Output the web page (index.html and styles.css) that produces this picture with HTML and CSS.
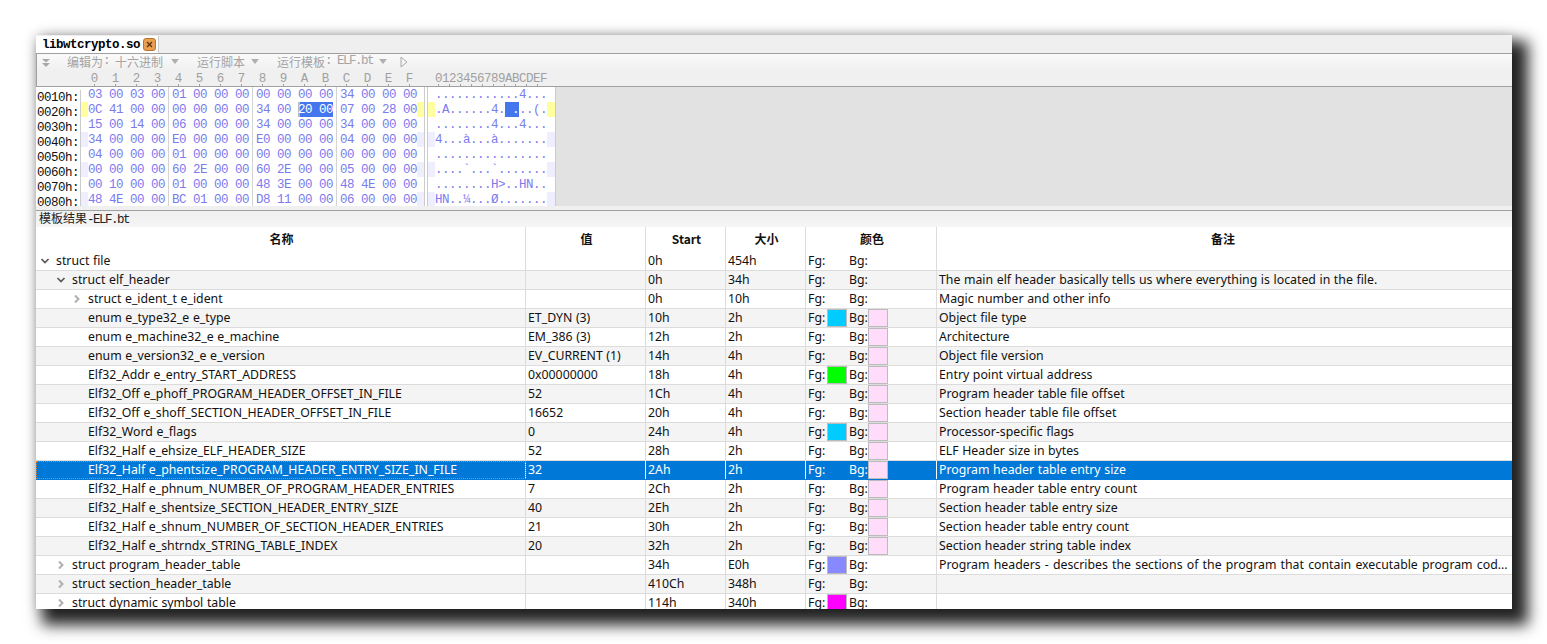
FILE: index.html
```html
<!DOCTYPE html>
<html lang="zh">
<head>
<meta charset="utf-8">
<title>libwtcrypto.so</title>
<link rel="stylesheet" href="styles.css">
</head>
<body>
<main class="window">
  <div class="tabbar">
    <div class="tab"><span class="tab-name">libwtcrypto.so</span>
      <svg class="tab-close" width="13" height="13" viewBox="0 0 13 13"><rect x=".5" y=".5" width="12" height="12" rx="2.5" fill="#e8a050" stroke="#b8742c"/><path d="M4 4l5 5M9 4l-5 5" stroke="#5a3010" stroke-width="1.3"/></svg>
    </div>
  </div>
  <div class="toolbar">
    <svg class="tb-icon" width="10" height="10" viewBox="0 0 10 10"><path d="M1 1h8L5 4.5zM1 5h8L5 9z" fill="#a8a8a8"/></svg>
    <span class="tb-item tb-edit">编辑为<span class="mono">: </span>十六进制<i class="caret"></i></span>
    <span class="tb-item tb-script">运行脚本<i class="caret"></i></span>
    <span class="tb-item tb-tpl">运行模板<span class="mono">: ELF.bt</span><i class="caret"></i></span>
    <svg class="tb-play" width="8" height="12" viewBox="0 0 8 12"><path d="M1 1l6 5-6 5z" fill="none" stroke="#a8a8a8"/></svg>
  </div>
  <div class="ruler">
    <div class="ruler-hex">
      <div class="rg"><span>0</span><span>1</span><span>2</span><span>3</span></div>
      <div class="rg"><span>4</span><span>5</span><span>6</span><span>7</span></div>
      <div class="rg"><span>8</span><span>9</span><span>A</span><span>B</span></div>
      <div class="rg"><span>C</span><span>D</span><span>E</span><span>F</span></div>
    </div>
    <div class="ruler-ascii">0123456789ABCDEF</div>
  </div>
  <div class="hex">
    <div class="hex-data">
      <div class="hr"><span class="off">0010h:</span><i class="m"></i><div class="g"><b>03</b><b>00</b><b>03</b><b>00</b></div><div class="g"><b>01</b><b>00</b><b>00</b><b>00</b></div><div class="g"><b>00</b><b>00</b><b>00</b><b>00</b></div><div class="g"><b>34</b><b>00</b><b>00</b><b>00</b></div><i class="m"></i><i class="sep"></i><i class="m"></i><span class="asc">............4...</span><i class="m me"></i></div>
      <div class="hr y"><span class="off">0020h:</span><i class="m"></i><div class="g"><b>0C</b><b>41</b><b>00</b><b>00</b></div><div class="g"><b>00</b><b>00</b><b>00</b><b>00</b></div><div class="g"><b>34</b><b>00</b><b class="sel sel-a">20</b><b class="sel">00</b></div><div class="g"><b>07</b><b>00</b><b>28</b><b>00</b></div><i class="m"></i><i class="sep"></i><i class="m"></i><span class="asc">.A......4.<em> .</em>..(.</span><i class="m me"></i></div>
      <div class="hr"><span class="off">0030h:</span><i class="m"></i><div class="g"><b>15</b><b>00</b><b>14</b><b>00</b></div><div class="g"><b>06</b><b>00</b><b>00</b><b>00</b></div><div class="g"><b>34</b><b>00</b><b>00</b><b>00</b></div><div class="g"><b>34</b><b>00</b><b>00</b><b>00</b></div><i class="m"></i><i class="sep"></i><i class="m"></i><span class="asc">........4...4...</span><i class="m me"></i></div>
      <div class="hr l"><span class="off">0040h:</span><i class="m"></i><div class="g"><b>34</b><b>00</b><b>00</b><b>00</b></div><div class="g"><b>E0</b><b>00</b><b>00</b><b>00</b></div><div class="g"><b>E0</b><b>00</b><b>00</b><b>00</b></div><div class="g"><b>04</b><b>00</b><b>00</b><b>00</b></div><i class="m"></i><i class="sep"></i><i class="m"></i><span class="asc">4...à...à.......</span><i class="m me"></i></div>
      <div class="hr"><span class="off">0050h:</span><i class="m"></i><div class="g"><b>04</b><b>00</b><b>00</b><b>00</b></div><div class="g"><b>01</b><b>00</b><b>00</b><b>00</b></div><div class="g"><b>00</b><b>00</b><b>00</b><b>00</b></div><div class="g"><b>00</b><b>00</b><b>00</b><b>00</b></div><i class="m"></i><i class="sep"></i><i class="m"></i><span class="asc">................</span><i class="m me"></i></div>
      <div class="hr l"><span class="off">0060h:</span><i class="m"></i><div class="g"><b>00</b><b>00</b><b>00</b><b>00</b></div><div class="g"><b>60</b><b>2E</b><b>00</b><b>00</b></div><div class="g"><b>60</b><b>2E</b><b>00</b><b>00</b></div><div class="g"><b>05</b><b>00</b><b>00</b><b>00</b></div><i class="m"></i><i class="sep"></i><i class="m"></i><span class="asc">....`...`.......</span><i class="m me"></i></div>
      <div class="hr"><span class="off">0070h:</span><i class="m"></i><div class="g"><b>00</b><b>10</b><b>00</b><b>00</b></div><div class="g"><b>01</b><b>00</b><b>00</b><b>00</b></div><div class="g"><b>48</b><b>3E</b><b>00</b><b>00</b></div><div class="g"><b>48</b><b>4E</b><b>00</b><b>00</b></div><i class="m"></i><i class="sep"></i><i class="m"></i><span class="asc">........H&gt;..HN..</span><i class="m me"></i></div>
      <div class="hr l"><span class="off">0080h:</span><i class="m"></i><div class="g"><b>48</b><b>4E</b><b>00</b><b>00</b></div><div class="g"><b>BC</b><b>01</b><b>00</b><b>00</b></div><div class="g"><b>D8</b><b>11</b><b>00</b><b>00</b></div><div class="g"><b>06</b><b>00</b><b>00</b><b>00</b></div><i class="m"></i><i class="sep"></i><i class="m"></i><span class="asc">HN..¼...Ø.......</span><i class="m me"></i></div>
    </div>
  </div>
  <div class="hex-foot"></div>
  <div class="tpl-title">模板结果<span class="mono">-ELF.bt</span></div>
  <div class="table">
    <div class="row head"><div>名称</div><div>值</div><div>Start</div><div>大小</div><div>颜色</div><div>备注</div></div>

    <div class="row"><div class="n1"><svg class="chev open" viewBox="0 0 10 10"><path d="M1.5 3L5 6.5 8.5 3"/></svg>struct file</div><div></div><div>0h</div><div>454h</div><div class="clr"><span class="fg">Fg:</span><span class="bg">Bg:</span></div><div></div></div>
    <div class="row"><div class="n2"><svg class="chev open" viewBox="0 0 10 10"><path d="M1.5 3L5 6.5 8.5 3"/></svg>struct elf_header</div><div></div><div>0h</div><div>34h</div><div class="clr"><span class="fg">Fg:</span><span class="bg">Bg:</span></div><div>The main elf header basically tells us where everything is located in the file.</div></div>
    <div class="row"><div class="n3"><svg class="chev" viewBox="0 0 10 10"><path d="M3 1.5L6.5 5 3 8.5"/></svg>struct e_ident_t e_ident</div><div></div><div>0h</div><div>10h</div><div class="clr"><span class="fg">Fg:</span><span class="bg">Bg:</span></div><div>Magic number and other info</div></div>
    <div class="row"><div class="n3">enum e_type32_e e_type</div><div>ET_DYN (3)</div><div>10h</div><div>2h</div><div class="clr"><span class="fg">Fg:<i class="sw cyan"></i></span><span class="bg">Bg:<i class="sw pink"></i></span></div><div>Object file type</div></div>
    <div class="row"><div class="n3">enum e_machine32_e e_machine</div><div>EM_386 (3)</div><div>12h</div><div>2h</div><div class="clr"><span class="fg">Fg:</span><span class="bg">Bg:<i class="sw pink"></i></span></div><div>Architecture</div></div>
    <div class="row"><div class="n3">enum e_version32_e e_version</div><div>EV_CURRENT (1)</div><div>14h</div><div>4h</div><div class="clr"><span class="fg">Fg:</span><span class="bg">Bg:<i class="sw pink"></i></span></div><div>Object file version</div></div>
    <div class="row"><div class="n3">Elf32_Addr e_entry_START_ADDRESS</div><div>0x00000000</div><div>18h</div><div>4h</div><div class="clr"><span class="fg">Fg:<i class="sw green"></i></span><span class="bg">Bg:<i class="sw pink"></i></span></div><div>Entry point virtual address</div></div>
    <div class="row"><div class="n3">Elf32_Off e_phoff_PROGRAM_HEADER_OFFSET_IN_FILE</div><div>52</div><div>1Ch</div><div>4h</div><div class="clr"><span class="fg">Fg:</span><span class="bg">Bg:<i class="sw pink"></i></span></div><div>Program header table file offset</div></div>
    <div class="row"><div class="n3">Elf32_Off e_shoff_SECTION_HEADER_OFFSET_IN_FILE</div><div>16652</div><div>20h</div><div>4h</div><div class="clr"><span class="fg">Fg:</span><span class="bg">Bg:<i class="sw pink"></i></span></div><div>Section header table file offset</div></div>
    <div class="row"><div class="n3">Elf32_Word e_flags</div><div>0</div><div>24h</div><div>4h</div><div class="clr"><span class="fg">Fg:<i class="sw cyan"></i></span><span class="bg">Bg:<i class="sw pink"></i></span></div><div>Processor-specific flags</div></div>
    <div class="row"><div class="n3">Elf32_Half e_ehsize_ELF_HEADER_SIZE</div><div>52</div><div>28h</div><div>2h</div><div class="clr"><span class="fg">Fg:</span><span class="bg">Bg:<i class="sw pink"></i></span></div><div>ELF Header size in bytes</div></div>
    <div class="row selected"><div class="n3 focus">Elf32_Half e_phentsize_PROGRAM_HEADER_ENTRY_SIZE_IN_FILE</div><div>32</div><div>2Ah</div><div>2h</div><div class="clr"><span class="fg">Fg:</span><span class="bg">Bg:<i class="sw pink"></i></span></div><div>Program header table entry size</div></div>
    <div class="row"><div class="n3">Elf32_Half e_phnum_NUMBER_OF_PROGRAM_HEADER_ENTRIES</div><div>7</div><div>2Ch</div><div>2h</div><div class="clr"><span class="fg">Fg:</span><span class="bg">Bg:<i class="sw pink"></i></span></div><div>Program header table entry count</div></div>
    <div class="row"><div class="n3">Elf32_Half e_shentsize_SECTION_HEADER_ENTRY_SIZE</div><div>40</div><div>2Eh</div><div>2h</div><div class="clr"><span class="fg">Fg:</span><span class="bg">Bg:<i class="sw pink"></i></span></div><div>Section header table entry size</div></div>
    <div class="row"><div class="n3">Elf32_Half e_shnum_NUMBER_OF_SECTION_HEADER_ENTRIES</div><div>21</div><div>30h</div><div>2h</div><div class="clr"><span class="fg">Fg:</span><span class="bg">Bg:<i class="sw pink"></i></span></div><div>Section header table entry count</div></div>
    <div class="row"><div class="n3">Elf32_Half e_shtrndx_STRING_TABLE_INDEX</div><div>20</div><div>32h</div><div>2h</div><div class="clr"><span class="fg">Fg:</span><span class="bg">Bg:<i class="sw pink"></i></span></div><div>Section header string table index</div></div>
    <div class="row"><div class="n2"><svg class="chev" viewBox="0 0 10 10"><path d="M3 1.5L6.5 5 3 8.5"/></svg>struct program_header_table</div><div></div><div>34h</div><div>E0h</div><div class="clr"><span class="fg">Fg:<i class="sw blue"></i></span><span class="bg">Bg:</span></div><div class="ell">Program headers - describes the sections of the program that contain executable program cod...</div></div>
    <div class="row"><div class="n2"><svg class="chev" viewBox="0 0 10 10"><path d="M3 1.5L6.5 5 3 8.5"/></svg>struct section_header_table</div><div></div><div>410Ch</div><div>348h</div><div class="clr"><span class="fg">Fg:</span><span class="bg">Bg:</span></div><div></div></div>
    <div class="row"><div class="n2"><svg class="chev" viewBox="0 0 10 10"><path d="M3 1.5L6.5 5 3 8.5"/></svg>struct dynamic symbol table</div><div></div><div>114h</div><div>340h</div><div class="clr"><span class="fg">Fg:<i class="sw magenta"></i></span><span class="bg">Bg:</span></div><div></div></div>
  </div>
</main>
</body>
</html>
```
FILE: styles.css
```css
html, body { margin: 0; padding: 0; height: 644px; overflow: hidden; background: #fff; }
body { padding: 35px 0 0 36px; box-sizing: border-box; font-family: "Noto Sans", "Noto Sans CJK SC", sans-serif; font-size: 12.3px; word-spacing: .4px; color: #111; }
.window { width: 1476px; height: 574px; overflow: hidden; background: #fff; box-shadow: 11px 11px 14px 5px rgba(0,0,0,.86), 0 0 12px rgba(0,0,0,.16); display: flex; flex-direction: column; }
.mono { font-family: "Liberation Mono", monospace; font-size: 12.5px; letter-spacing: -1.5px; word-spacing: 0; white-space: pre; }

.tabbar { height: 18px; background: #efefef; border-bottom: 1px solid #a0a0a0; display: flex; flex: none; }
.tab { width: 122px; margin-top: 1px; background: #fff; border-right: 1px solid #ccc; display: flex; align-items: center; box-sizing: content-box; }
.tab-name { font: bold 12.5px/19px "Liberation Mono", monospace; letter-spacing: -.5px; color: #000; margin-left: 6px; width: 101px; height: 17px; }
.tab-close { flex: none; }

.toolbar { height: 15px; padding-bottom: 2px; flex: none; display: flex; align-items: center; color: #a4a4a4; background: linear-gradient(#fafafa, #f0f0f0); border-left: 1px solid #a0a0a0; font-family: "Noto Sans CJK SC", sans-serif; font-size: 12px; line-height: 15px; word-spacing: 0; }
.tb-icon { margin-left: 4px; flex: none; position: relative; top: 1px; }
.tb-item { display: flex; align-items: center; white-space: pre; }
.tb-edit { margin-left: 16px; width: 130px; }
.tb-edit .caret { margin-left: 8px; }
.tb-script { width: 80px; }
.tb-tpl { width: 122px; }
.caret { width: 0; height: 0; margin-left: 6px; border: 4px solid transparent; border-top: 5px solid #b0b0b0; border-bottom: 0; }
.tb-play { flex: none; margin-left: 1px; }

.ruler { height: 15px; flex: none; background: #f0f0f0; border-left: 1px solid #a0a0a0; border-bottom: 1px solid #a0a0a0; display: flex; font: 12.5px/16px "Liberation Mono", monospace; color: #a0a0a0; }
.ruler-hex { display: flex; margin-left: 47px; width: 351px; }
.rg { display: flex; width: 84px; }
.rg span { width: 21px; height: 15px; text-align: center; box-sizing: border-box; background: linear-gradient(#a0a0a0, #a0a0a0) center bottom / 1px 2px no-repeat; }
.ruler-ascii { letter-spacing: -.5px; white-space: pre; width: 112px; height: 15px; background: repeating-linear-gradient(90deg, #a0a0a0 3px, #a0a0a0 4px, transparent 4px, transparent 14px) left bottom / 100% 2px no-repeat; }

.hex { height: 119px; flex: none; background: #e2e2e2; overflow: hidden; }
.hex-data { width: 520px; background: #fff; font: 12.5px/17px "Liberation Mono", monospace; letter-spacing: -.5px; word-spacing: 0; color: #7b7bee; }
.hr { display: flex; height: 15px; }
.hr i { font-style: normal; }
.off { width: 44px; padding-left: 1px; color: #111; border-right: 1px solid #ccc; position: relative; top: 3px; box-sizing: content-box; height: 15px; }
.m { width: 7px; height: 15px; flex: none; }
.y .m { background: #ffffa0; }
.l .m { background: #eeeeff; }
.g { display: flex; gap: 7px; height: 15px; }
.g + .g { margin-left: 3px; padding-left: 3px; border-left: 1px solid #d4d4d4; }
.g b { font-weight: normal; width: 14px; flex: none; }
.sel { background: #4477ee; color: #fff; box-shadow: 7px 0 0 #4477ee; }
.sel + .sel { box-shadow: none; }
.sel-a { box-shadow: inset 2px 0 0 #bbb, 7px 0 0 #4477ee; }
.sep { width: 2px; height: 15px; border-left: 1px solid #ccc; border-right: 1px solid #ccc; flex: none; box-sizing: content-box; }
.asc { width: 112px; height: 15px; white-space: pre; flex: none; }
.asc em { font-style: normal; display: inline-block; height: 15px; background: #4477ee; color: #fff; vertical-align: top; }
.me { width: 8px; border-right: 1px solid #ccc; }

.hex-foot { height: 4px; flex: none; background: #f0f0f0; border-bottom: 1px solid #a0a0a0; }
.tpl-title { height: 16px; flex: none; padding-left: 3px; line-height: 14px; background: linear-gradient(#f0f0f0, #f5f5f5); font-family: "Noto Sans CJK SC", sans-serif; font-size: 12px; color: #222; }

.table { flex: none; }
.row { display: grid; grid-template-columns: 490px 120px 80px 80px 131px 575px; height: 19px; line-height: 18px; background: #fff; box-sizing: border-box; border-bottom: 1px solid #dcdcdc; }
.row:nth-child(odd) { background: #f4f4f4; }
.row > div { padding-left: 2px; border-right: 1px solid #dcdcdc; box-sizing: border-box; white-space: nowrap; overflow: hidden; position: relative; }
.row > div:last-child { border-right: 0; padding-right: 5px; }
.row.head { height: 25px; background: #fff; border-bottom: 0; font-weight: 700; font-size: 12px; line-height: 24px; }
.head > div { text-align: center; font-family: "Noto Sans CJK SC", "Noto Sans", sans-serif; }
.row > .n1 { padding-left: 20px; }
.row > .n2 { padding-left: 36px; }
.row > .n3 { padding-left: 52px; }
.chev { width: 10px; height: 10px; position: absolute; top: 4px; fill: none; stroke: #b0b0b0; stroke-width: 2; }
.chev.open { stroke: #585858; stroke-width: 1.7; }
.n1 .chev { left: 4px; }
.n2 .chev { left: 20px; }
.n3 .chev { left: 36px; }
.row > .ell { word-spacing: 1px; }

.clr { display: flex; gap: 2px; }
.fg, .bg { display: flex; justify-content: space-between; flex: none; }
.fg { width: 39px; }
.bg { width: 38px; }
.sw { display: block; width: 20px; height: 18px; box-sizing: border-box; border: 1px solid #bbb; flex: none; }
.cyan { background: #00ccff; }
.pink { background: #ffddfa; }
.green { background: #00ff00; }
.blue { background: #8888ff; }
.magenta { background: #ff00ff; }

.row.selected { background: #0078d7; color: #fff; border-bottom-color: #0078d7; }
.selected > div { border-right-color: #fff; }
.selected > .focus { outline: 1px dotted #e08030; outline-offset: -1px; }
```
